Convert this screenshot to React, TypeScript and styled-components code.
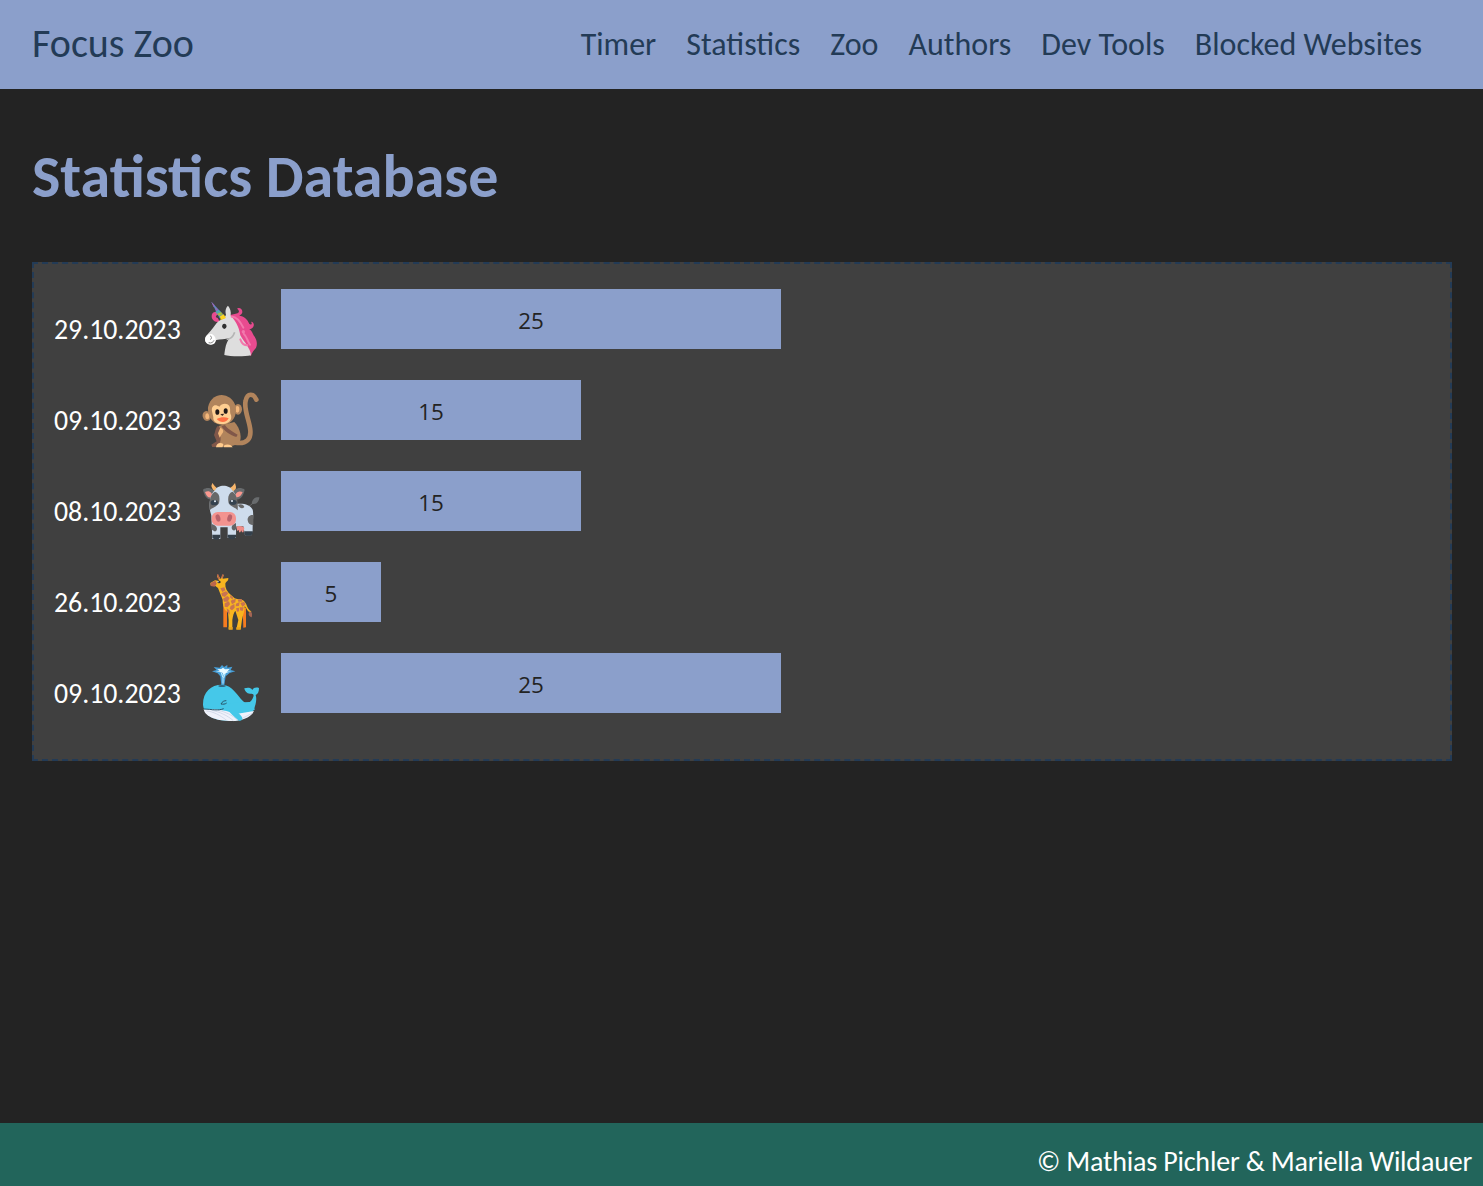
import React from "react";
import styled, { createGlobalStyle } from "styled-components";

const GlobalStyle = createGlobalStyle`
  * { box-sizing: border-box; }
  body { margin: 0; background: #232323; font-family: Calibri, Carlito, Lato, sans-serif; }
`;

const Page = styled.div`
  display: flex;
  flex-direction: column;
  min-height: 100vh;
`;

const Header = styled.header`
  display: flex;
  align-items: center;
  justify-content: space-between;
  height: 89px;
  padding: 0 61px 0 32px;
  background: #8b9fcb;
  color: #233b56;
`;

const Logo = styled.span`
  padding-bottom: 1px;
  font-size: 40px;
  line-height: 48px;
`;

const Nav = styled.nav`
  display: flex;
  gap: 30px;
`;

const NavLink = styled.a`
  font-size: 32px;
  line-height: 40px;
  white-space: nowrap;
`;

const Main = styled.main`
  flex: 1;
  padding: 53px 31px 0 32px;
`;

const Title = styled.h1`
  margin: 0 0 50px;
  font-size: 60px;
  line-height: 70px;
  font-weight: 700;
  color: #8b9fcb;
`;

const Panel = styled.section`
  display: flex;
  flex-direction: column;
  gap: 31px;
  height: 499px;
  padding: 25px 20px;
  background: #404040;
  border: 2px dashed #233b56;
`;

const Row = styled.div`
  display: grid;
  grid-template-columns: 148px 79px auto;
  justify-content: start;
  height: 60px;
`;

const DateLabel = styled.span`
  padding-top: 24px;
  font-size: 27.8px;
  line-height: 34px;
  font-weight: 300;
  color: #fff;
`;

const Animal = styled.svg`
  width: 58px;
  height: 58px;
  margin-top: 11px;
`;

const Bar = styled.div`
  height: 60px;
  background: #8b9fcb;
  color: #232323;
  font-family: "Open Sans", sans-serif;
  font-size: 22.4px;
  line-height: 64px;
  text-align: center;
`;

const Footer = styled.footer`
  display: flex;
  justify-content: flex-end;
  height: 63px;
  padding: 22px 11px 0 0;
  background: #22655b;
  color: #fff;
  font-size: 28px;
  letter-spacing: -0.18px;
  line-height: 34px;
`;

const Unicorn = () => (
  <Animal viewBox="36 30 174 174">
    <path d="M90 96C79 98 66 92 65 80C64 70 72 64 80 67L87 71L81 76C76 77 77 84 83 84Z" fill="#e84b8f" />
    <path d="M120 76C130 70 139 73 145 68C149 64 146 59 141 56C148 51 158 58 157 67C156 73 151 75 148 77C161 77 173 88 178 102C184 106 188 101 183 95C193 96 194 108 187 114C184 117 180 118 177 117C188 123 188 133 193 139C205 156 201 174 193 179C187 186 184 193 183 198L158 180L136 140L114 87Z" fill="#e84b8f" />
    <path d="M108 74C104 60 110 50 114 47C120 54 124 64 122 77C137 93 147 109 151 136C163 158 181 174 183 196C163 200 120 200 103 195C105 177 108 157 119 144C105 148 90 148 79 150C73 160 65 165 56 163C45 160 43 147 48 139C57 128 66 119 75 106C81 96 91 89 103 85Z" fill="#dedede" />
    <path d="M47 141C51 133 60 130 67 133C75 138 79 147 76 156C73 165 58 167 50 159C44 154 44 147 47 141Z" fill="#fff" />
    <path d="M64 35L103 77L89 85Z" fill="#5b8fc4" />
    <path d="M64 35L74 46L71 52ZM76 50L84 59L78 66Z" fill="#9865b7" />
    <path d="M86 60L93 66L81 72L76 65Z" fill="#52a5b2" />
    <path d="M93 66L99 73L87 78L82 71Z" fill="#a2bc41" />
    <path d="M101 73L108 84L92 90L90 79Z" fill="#ffd51f" />
    <path d="M125 80C135 79 149 91 160 113M161 131C171 139 172 155 180 164M151 148C155 160 163 166 172 166" fill="none" stroke="#f279ad" strokeWidth="6" strokeLinecap="round" />
    <circle cx="160" cy="125" r="5" fill="#f279ad" />
    <ellipse cx="103" cy="109" rx="6.5" ry="8" fill="#303030" />
    <path d="M110 148C122 148 130 139 134 127" fill="none" stroke="#b5b5b5" strokeWidth="5" />
    <path d="M60 137C66 140 66 148 60 148M56 158C64 161 70 156 72 151" fill="none" stroke="#888" strokeWidth="3" />
  </Animal>
);

const Monkey = () => (
  <Animal viewBox="36 33 174 174">
    <path d="M135 188C173 194 183 174 181 151C179 122 160 88 167 62C172 39 191 39 199 59" fill="none" stroke="#b1845c" strokeWidth="14" strokeLinecap="round" />
    <path d="M88 137L133 126C151 145 158 176 146 190C130 200 108 202 91 198L76 165Z" fill="#b1845c" />
    <path d="M84 137C94 145 95 160 91 168C95 187 87 198 67 201L64 194L80 184L72 165C76 157 75 145 84 137Z" fill="#805749" />
    <path d="M94 138L105 135C111 145 126 154 143 164L139 171C121 166 102 153 94 138Z" fill="#805749" />
    <path d="M91 143C100 147 103 154 96 161L89 173L84 160Z" fill="#efb579" />
    <ellipse cx="50" cy="108" rx="12" ry="15" transform="rotate(-15 50 108)" fill="#b1845c" />
    <ellipse cx="52" cy="109" rx="6" ry="9" fill="#f3b77b" />
    <ellipse cx="144" cy="88" rx="12" ry="16" fill="#b1845c" />
    <ellipse cx="142" cy="88" rx="6" ry="10" fill="#f3b77b" />
    <ellipse cx="96" cy="90" rx="42" ry="45" transform="rotate(-10 96 90)" fill="#b1845c" />
    <path d="M66 94C63 77 75 70 88 80C94 70 111 67 118 78C123 89 118 96 123 105C127 121 116 130 101 132C83 134 68 126 70 112Z" fill="#ffce91" />
    <ellipse cx="82" cy="96" rx="6" ry="8.5" fill="#201818" />
    <ellipse cx="107" cy="93" rx="6" ry="8.5" fill="#201818" />
    <path d="M91 102L103 101L97 108Z" fill="#3b2923" />
    <path d="M80 117C92 110 106 110 116 115C110 129 90 130 80 117Z" fill="#ff7043" />
    <path d="M66 201L69 193L82 189L79 201Z" fill="#805749" />
    <path d="M78 201C80 188 91 186 100 192L98 202H78ZM101 197C112 190 125 195 128 202H101Z" fill="#ffcb8d" />
  </Animal>
);

const Cow = () => (
  <Animal viewBox="36 36 174 174">
    <path d="M169 112C181 108 187 101 192 97" fill="none" stroke="#686868" strokeWidth="3" />
    <path d="M185 101C186 87 196 80 208 82C207 97 198 105 185 101Z" fill="#686b6d" />
    <path d="M124 106C150 97 179 101 188 119C192 132 187 164 188 182L184 196H165L160 169L127 170Z" fill="#cedcec" />
    <path d="M144 104C154 100 161 104 163 111C157 118 147 114 144 104Z" fill="#686868" />
    <path d="M190 135C179 133 172 141 173 151C174 162 184 167 190 164Z" fill="#686868" />
    <path d="M63 116H139L138 204H113V172H91V207H67Z" fill="#cedcec" />
    <path d="M65 162C76 165 84 173 80 181C76 188 68 182 65 178ZM138 159C125 164 122 173 128 180C134 184 138 177 138 177Z" fill="#626466" />
    <path d="M67 194H91V202L84 209H74L67 203ZM113 194H138V202L131 208H121L113 202ZM163 184H188V192L182 197H167L163 191Z" fill="#34404b" />
    <path d="M64 48L67 39L74 48L81 55L74 63C68 61 67 55 64 48ZM138 50L135 39L127 49L120 54L130 65C137 61 138 56 138 50Z" fill="#f6b56b" />
    <path d="M39 59C54 49 72 56 75 71L70 89C49 91 43 76 39 59ZM164 59C149 49 132 56 127 71L133 88C153 92 161 75 164 59Z" fill="#686b6d" />
    <path d="M45 66C58 60 67 67 67 81C56 86 49 79 45 66ZM158 66C146 61 135 68 136 80C145 85 154 78 158 66Z" fill="#fa988f" />
    <path d="M75 61C82 43 119 43 127 61C146 77 144 124 133 137L115 154H81L63 133C54 108 60 72 75 61Z" fill="#cedcec" />
    <path d="M75 65C87 68 91 81 87 100C79 112 64 114 59 121C56 93 62 71 75 65ZM127 65C116 69 112 82 116 100C123 111 137 113 143 121C145 89 139 71 127 65Z" fill="#686868" />
    <ellipse cx="73" cy="98" rx="11" ry="8" fill="#34424f" /><ellipse cx="129" cy="97" rx="11" ry="8" fill="#34424f" />
    <circle cx="75" cy="94" r="3" fill="#e8f1f8" /><circle cx="126" cy="93" r="3" fill="#e8f1f8" />
    <rect x="65" y="126" width="73" height="41" rx="18" fill="#f3938f" />
    <ellipse cx="84" cy="144" rx="7" ry="11" transform="rotate(-15 84 144)" fill="#b9626b" />
    <ellipse cx="119" cy="144" rx="7" ry="11" transform="rotate(15 119 144)" fill="#b9626b" />
    <path d="M139 171C145 166 160 168 163 174L160 187H156L154 181L151 187H147V180L142 183Z" fill="#ef8c87" />
  </Animal>
);

const Giraffe = () => (
  <Animal viewBox="36 33 174 174">
    <path d="M100 128H111V196H100ZM158 137H168V196L160 197Z" fill="#f57c20" />
    <path d="M88 57L81 43L83 38L92 51L98 38L101 40L98 50L115 48C116 58 107 59 106 65C105 78 111 88 123 99L134 109C145 113 158 109 166 122C172 130 171 140 184 148L182 152C170 148 169 136 164 133C165 147 159 157 156 173L152 202H139L145 174L136 146C131 152 129 160 127 174V202H116V174L114 150C102 145 98 130 98 113L84 78L76 72L62 70L61 63L75 55Z" fill="#f8b51f" />
    <path d="M81 37H85L90 51L84 52ZM97 37H101L98 49H93ZM62 63L76 56L80 65L74 74L62 72Z" fill="#bb674d" />
    <path d="M178 149C185 147 188 155 185 166C178 164 173 156 178 149Z" fill="#a36554" />
    <path d="M91 79L103 76L106 85L97 90ZM94 94L108 88L115 94L105 105L96 102ZM99 110L112 102L119 108L113 119L102 119ZM121 99L129 106L128 113L120 106ZM104 124L117 118L120 127L112 136L104 134ZM122 116L137 110L136 121L126 127ZM122 132L133 126L134 137L126 145L119 140ZM138 125L149 120L147 132L137 133ZM143 112L156 112L157 119L145 119ZM151 123L163 119L166 128L157 134ZM149 136H161L158 147L150 145ZM138 139L147 137L147 148L141 149ZM110 139L118 145L119 158L112 151Z" fill="#c97451" />
    <ellipse cx="87" cy="60" rx="5" ry="4" fill="#303030" />
    <circle cx="84" cy="59" r="2" fill="#fff" />
    <path d="M116 195H128V203H116ZM139 196H152V203H139Z" fill="#e8a51d" />
  </Animal>
);

const Whale = () => (
  <Animal viewBox="36 27 174 174">
    <path d="M94 90L91 64L83 55L66 49L80 45L71 36L89 38L96 30L102 36L112 30L112 38L127 35L122 45L136 49L119 54L107 64L103 91Z" fill="#479fd8" />
    <path d="M82 43L94 42L99 38L105 43L119 42L111 50L124 49L108 54L101 61L97 53L77 49L90 49Z" fill="#e8faff" />
    <path d="M99 57V86M94 54L98 66M106 55L101 69" fill="none" stroke="#bcecff" strokeWidth="3" />
    <path d="M39 150C38 111 63 88 98 89C127 91 143 122 158 137C169 149 182 143 187 132C193 122 192 115 183 116C171 118 164 108 163 100C173 98 181 97 187 105C190 98 198 96 207 99C207 109 204 118 197 120C202 135 195 153 193 159C187 181 157 197 126 198C81 198 44 188 39 150Z" fill="#45c8e9" />
    <path d="M41 163L75 163C99 165 121 171 138 177L192 168C181 191 151 198 126 198C84 198 46 188 41 163Z" fill="#f0f2fb" />
    <path d="M49 168C69 169 91 181 110 196M65 166C88 170 113 182 130 197M84 166C106 170 128 181 143 195M151 193L188 174" fill="none" stroke="#c5cfe2" strokeWidth="2" />
    <path d="M109 162C120 171 130 185 147 197C152 199 158 196 157 190C155 182 149 178 145 174L194 165L190 140L120 145Z" fill="#45c8e9" />
    <path d="M42 162C67 163 84 168 101 161M93 147C99 148 105 148 110 144M93 147C97 139 103 137 109 137" fill="none" stroke="#275569" strokeWidth="3" />
    <ellipse cx="96" cy="93" rx="11" ry="3" fill="#326780" />
  </Animal>
);

const links = ["Timer", "Statistics", "Zoo", "Authors", "Dev Tools", "Blocked Websites"];

const sessions = [
  { date: "29.10.2023", minutes: 25, Icon: Unicorn },
  { date: "09.10.2023", minutes: 15, Icon: Monkey },
  { date: "08.10.2023", minutes: 15, Icon: Cow },
  { date: "26.10.2023", minutes: 5, Icon: Giraffe },
  { date: "09.10.2023", minutes: 25, Icon: Whale },
];

export default function App() {
  return (
    <Page>
      <GlobalStyle />
      <Header>
        <Logo>Focus Zoo</Logo>
        <Nav>{links.map((l) => <NavLink key={l}>{l}</NavLink>)}</Nav>
      </Header>
      <Main>
        <Title>Statistics Database</Title>
        <Panel>
          {sessions.map(({ date, minutes, Icon }, i) => (
            <Row key={i}>
              <DateLabel>{date}</DateLabel>
              <Icon />
              <Bar style={{ width: minutes * 20 }}>{minutes}</Bar>
            </Row>
          ))}
        </Panel>
      </Main>
      <Footer>© Mathias Pichler &amp; Mariella Wildauer</Footer>
    </Page>
  );
}
